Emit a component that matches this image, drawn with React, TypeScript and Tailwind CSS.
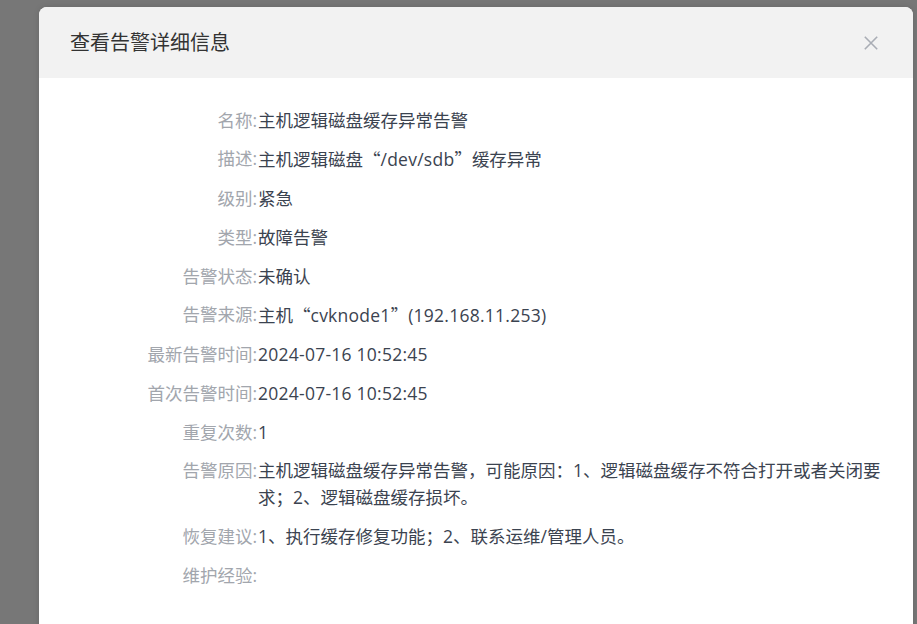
import React from "react";

const rows: [string, string][] = [
  ["名称:", "主机逻辑磁盘缓存异常告警"],
  ["描述:", "主机逻辑磁盘“/dev/sdb”缓存异常"],
  ["级别:", "紧急"],
  ["类型:", "故障告警"],
  ["告警状态:", "未确认"],
  ["告警来源:", "主机“cvknode1”(192.168.11.253)"],
  ["最新告警时间:", "2024-07-16 10:52:45"],
  ["首次告警时间:", "2024-07-16 10:52:45"],
  ["重复次数:", "1"],
  [
    "告警原因:",
    "主机逻辑磁盘缓存异常告警，可能原因：1、逻辑磁盘缓存不符合打开或者关闭要求；2、逻辑磁盘缓存损坏。",
  ],
  ["恢复建议:", "1、执行缓存修复功能；2、联系运维/管理人员。"],
  ["维护经验:", ""],
];

function Value({ text }: { text: string }) {
  const parts = text.split(/([“”]|[A-Za-z0-9.\-:/() ]{2,})/);
  return (
    <>
      {parts.map((p, i) => {
        if (p === "“" || p === "”")
          return (
            <span key={i} className="font-['Noto_Sans_CJK_SC']">
              {p}
            </span>
          );
        if (/^[A-Za-z0-9.\-:/() ]{2,}$/.test(p))
          return (
            <span key={i} className="tracking-[0.25px]">
              {p}
            </span>
          );
        return <React.Fragment key={i}>{p}</React.Fragment>;
      })}
    </>
  );
}

export default function App() {
  return (
    <div
      className="relative w-[917px] h-[624px] overflow-hidden bg-[#777777] pt-[7px] pl-[39px] pr-[4px]"
      style={{ fontFamily: '"Open Sans", "Noto Sans CJK SC", sans-serif' }}
    >
      <div className="h-[700px] rounded-t-[8px] bg-white overflow-hidden shadow-[0_0_6px_rgba(0,0,0,0.12)]">
        <div className="h-[71px] bg-[#f2f2f2] flex items-center justify-between pl-[31px] pr-[35px]">
          <span className="text-[20px] text-[#333333] leading-none">查看告警详细信息</span>
          <svg width="14" height="14" viewBox="0 0 14 14" className="block">
            <path d="M0.8 0.8 L13.2 13.2 M13.2 0.8 L0.8 13.2" stroke="#a9adb5" strokeWidth="1.6" fill="none" />
          </svg>
        </div>
        <div className="flex flex-col gap-[11.75px] pt-[28.5px] pr-[25px] text-[17.5px] leading-[27px]">
          {rows.map(([label, value]) => (
            <div key={label} className="flex">
              <div className="w-[218px] shrink-0 text-right text-[#a2a6ad]">{label}</div>
              <div className="flex-1 pl-[1px] text-[#3b4350]">
                <Value text={value} />
              </div>
            </div>
          ))}
        </div>
      </div>
    </div>
  );
}
